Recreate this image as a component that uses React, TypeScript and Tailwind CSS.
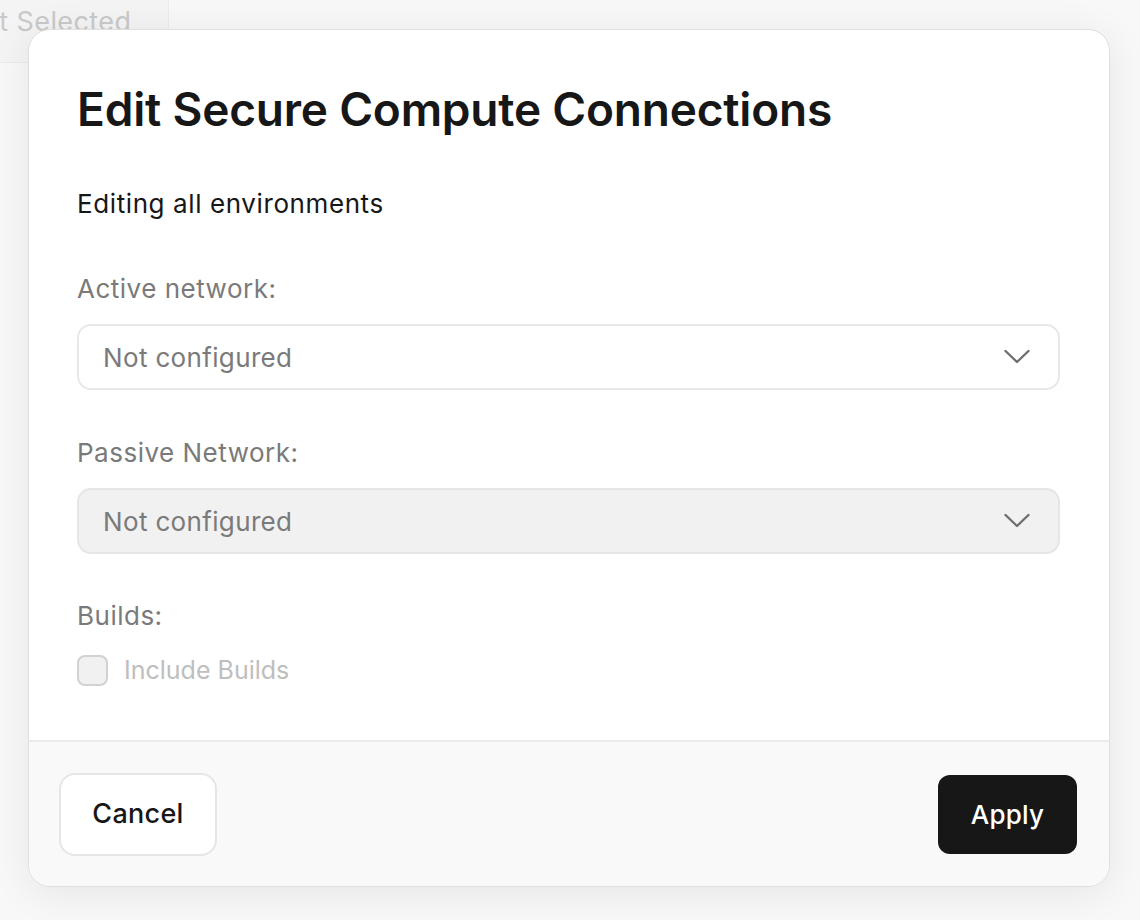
import React from "react";

function Chevron() {
  return (
    <svg width="26" height="16" viewBox="0 0 26 16" fill="none">
      <path d="M1.5 2 L13 13 L24.5 2" stroke="#6e6e6e" strokeWidth="2.4" strokeLinecap="round" strokeLinejoin="round" />
    </svg>
  );
}

export default function App() {
  const font = { fontFamily: "Inter, 'Noto Sans', sans-serif" };
  return (
    <div className="relative w-[1140px] h-[920px] overflow-hidden bg-[#f8f8f8]" style={font}>
      {/* background content */}
      <div className="w-[169px] h-[63px] bg-[#f4f4f4] border-r border-b border-[#ebebeb] flex items-start pt-[5px] overflow-hidden">
        <span className="-ml-[38px] text-[27px] leading-[34px] tracking-[0.4px] text-[#c9c9c9] whitespace-nowrap">Not Selected</span>
      </div>

      {/* modal */}
      <div className="absolute left-[28px] top-[29px] w-[1082px] h-[858px] bg-white rounded-[22px] border border-[#dfdfdf] shadow-[0_6px_40px_rgba(0,0,0,0.08)] flex flex-col overflow-hidden">
        <div className="flex-1 flex flex-col pl-[48px] pr-[49px] pt-[51px]">
          <h1 className="text-[46px] leading-[56px] font-semibold text-[#171717] tracking-[-0.2px]">
            Edit Secure Compute Connections
          </h1>
          <p className="mt-[51px] text-[26px] leading-[32px] tracking-[0.6px] text-[#171717]">Editing all environments</p>

          <div className="mt-[53px] text-[26px] leading-[32px] tracking-[0.5px] text-[#7a7a7a]">Active network:</div>
          <div className="mt-[19px] h-[66px] rounded-[14px] border-2 border-[#e8e8e8] bg-white flex items-center justify-between pl-[24px] pr-[28px]">
            <span className="text-[26px] tracking-[0.35px] text-[#7a7a7a]">Not configured</span>
            <Chevron />
          </div>

          <div className="mt-[47px] text-[26px] leading-[32px] tracking-[0.5px] text-[#7a7a7a]">Passive Network:</div>
          <div className="mt-[19px] h-[66px] rounded-[14px] border-2 border-[#e6e6e6] bg-[#f1f1f1] flex items-center justify-between pl-[24px] pr-[28px]">
            <span className="text-[26px] tracking-[0.35px] text-[#7a7a7a]">Not configured</span>
            <Chevron />
          </div>

          <div className="mt-[46px] text-[26px] leading-[32px] tracking-[0.5px] text-[#7a7a7a]">Builds:</div>
          <div className="mt-[20px] flex items-center gap-[16px]">
            <div className="w-[31px] h-[31px] rounded-[8px] border-2 border-[#d2d2d2] bg-[#f1f1f1]" />
            <span className="text-[25px] text-[#bebebe]">Include Builds</span>
          </div>
        </div>

        <div className="h-[146px] border-t-2 border-[#ebebeb] bg-[#f9f9f9] flex items-center justify-between pl-[30px] pr-[32px]">
          <button className="w-[158px] h-[83px] rounded-[16px] border-2 border-[#e6e6e6] bg-white text-[27px] tracking-[0.3px] text-[#171717] font-medium">
            Cancel
          </button>
          <button className="w-[139px] h-[79px] rounded-[12px] bg-[#171717] text-[26px] tracking-[0.2px] text-white font-medium">
            Apply
          </button>
        </div>
      </div>
    </div>
  );
}
